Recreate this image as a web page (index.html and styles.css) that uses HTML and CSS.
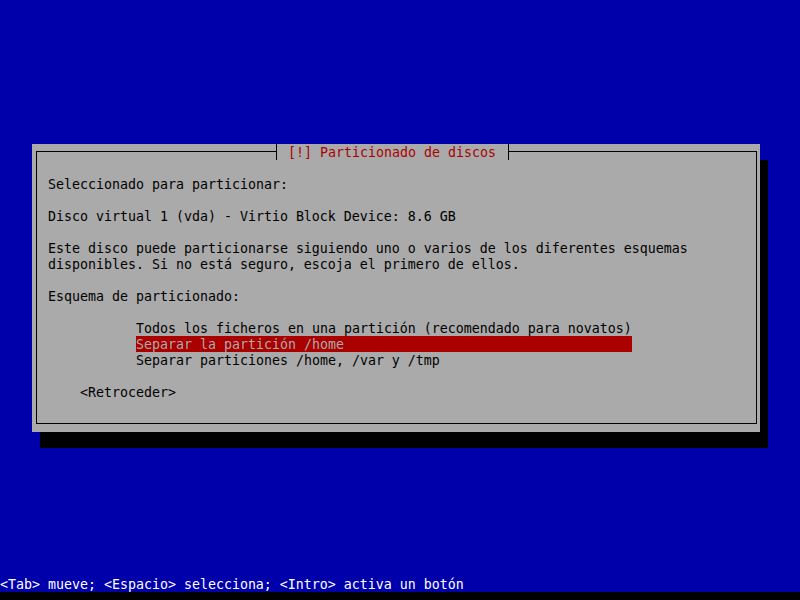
FILE: index.html
```html
<!DOCTYPE html>
<html lang="es">
<head>
    <meta charset="UTF-8">
    <title>Particionado de discos</title>
    <link rel="stylesheet" href="styles.css">
</head>
<body>
    <div class="screen">
        <!-- Dialog -->
        <div class="dialog">
            <div class="dialog-title">[!] Particionado de discos</div>
            <p class="line">Seleccionado para particionar:</p>
            <p class="line gap">Disco virtual 1 (vda) - Virtio Block Device: 8.6 GB</p>
            <p class="line gap">Este disco puede particionarse siguiendo uno o varios de los diferentes esquemas</p>
            <p class="line">disponibles. Si no está seguro, escoja el primero de ellos.</p>
            <p class="line gap">Esquema de particionado:</p>
            <ul class="choices gap">
                <li class="choice">Todos los ficheros en una partición (recomendado para novatos)</li>
                <li class="choice selected">Separar la partición /home</li>
                <li class="choice">Separar particiones /home, /var y /tmp</li>
            </ul>
            <p class="line gap button">&lt;Retroceder&gt;</p>
        </div>

        <!-- Help line -->
        <div class="help">&lt;Tab&gt; mueve; &lt;Espacio&gt; selecciona; &lt;Intro&gt; activa un botón</div>
    </div>
</body>
</html>
```

FILE: styles.css
```css
/* Reset */
* {
    margin: 0;
    padding: 0;
    box-sizing: border-box;
}

body {
    width: 800px;
    height: 600px;
    overflow: hidden;
    background-color: #000;
    font-family: "DejaVu Sans Mono", monospace;
    font-size: 13.29px;
    line-height: 16px;
    color: #000;
}

/* Blue console area, 37 rows of 16px */
.screen {
    height: 592px;
    background-color: #0000aa;
    display: flex;
    flex-direction: column;
}

/* Grey dialog with shadow */
.dialog {
    position: relative;
    width: 728px;
    height: 288px;
    margin: 144px 0 0 32px;
    padding: 32px 0 0 16px;
    background-color: #aaaaaa;
    box-shadow: 8px 16px 0 0 #000;
}

.dialog::before {
    content: '';
    position: absolute;
    top: 7px;
    left: 4px;
    right: 3px;
    bottom: 8px;
    border: 1px solid #000;
    pointer-events: none;
}

.dialog-title {
    position: absolute;
    top: 0;
    left: 244px;
    width: 233px;
    height: 16px;
    padding: 1px 0 0 11px;
    background-color: #aaaaaa;
    border-left: 1px solid #000;
    border-right: 1px solid #000;
    color: #aa0000;
    white-space: pre;
}

/* Every text row sits in a 16px cell, glyphs 1px low like the console font */
.line {
    height: 16px;
    padding-top: 1px;
    white-space: pre;
}

.gap {
    margin-top: 16px;
}

/* Partitioning choices */
.choices {
    list-style: none;
    padding-left: 88px;
}

.choice {
    width: 496px;
    height: 16px;
    padding-top: 1px;
    white-space: pre;
}

.choice.selected {
    background-color: #aa0000;
    color: #aaaaaa;
}

.button {
    padding-left: 32px;
}

/* Bottom help line */
.help {
    margin-top: auto;
    height: 16px;
    padding-top: 1px;
    color: #ffffff;
    white-space: pre;
}
```
